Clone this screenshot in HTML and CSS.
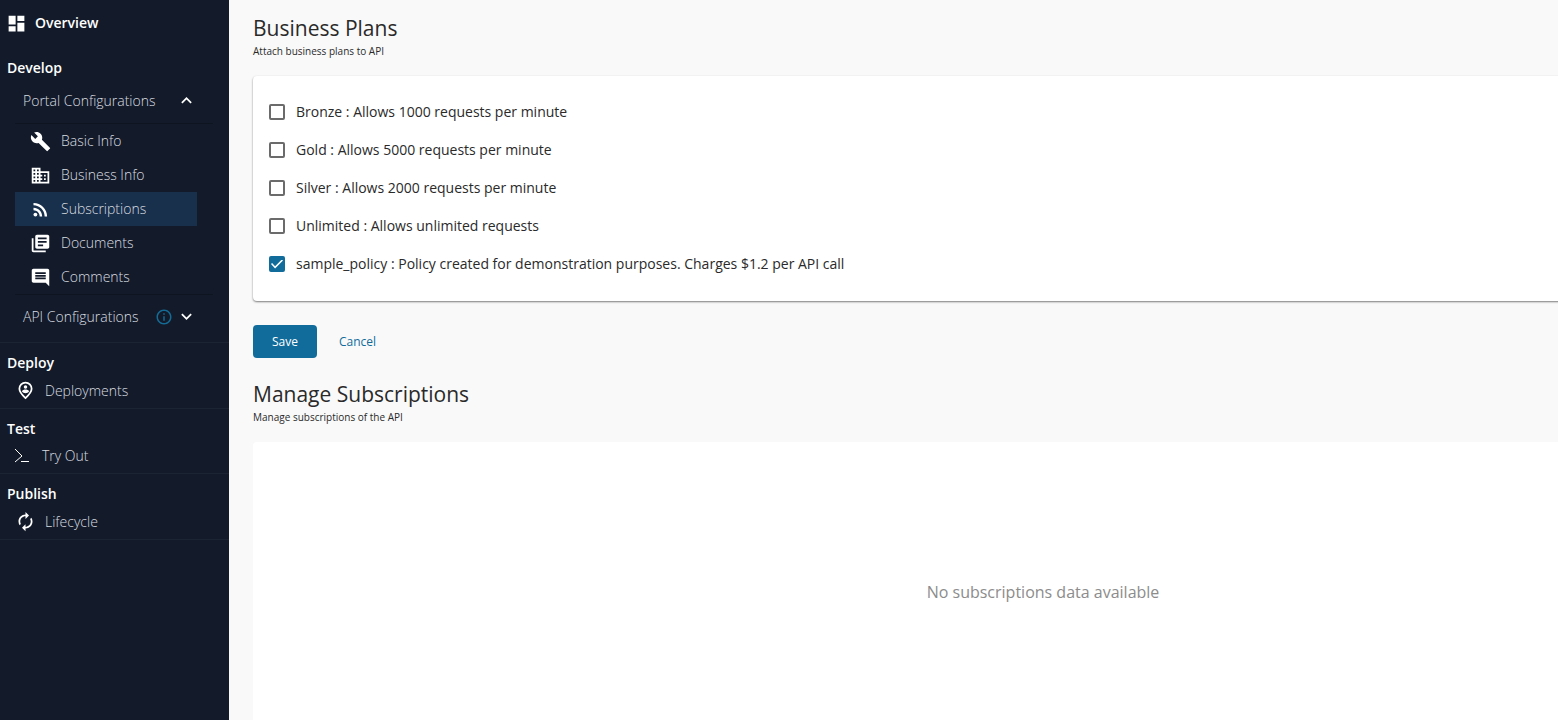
FILE: index.html
```html
<!DOCTYPE html>
<html lang="en">
<head>
<meta charset="utf-8">
<title>Business Plans</title>
<link rel="stylesheet" href="styles.css">
</head>
<body>
<div class="app">
  <nav class="sidebar">
    <a class="overview" href="#">
      <svg class="icon" viewBox="0 0 24 24"><path d="M3 13h8V3H3v10zm0 8h8v-6H3v6zm10 0h8V11h-8v10zm0-18v6h8V3h-8z"/></svg>
      <span>Overview</span>
    </a>
    <section class="group develop">
      <h2 class="group-title">Develop</h2>
      <button class="toggle" type="button"><span>Portal Configurations</span>
        <svg class="chevron" viewBox="0 0 24 24"><path d="M12 8l-6 6 1.410 1.410L12 10.830l4.590 4.580L18 14z"/></svg>
      </button>
      <ul class="subnav">
        <li><a class="item" href="#"><svg class="icon" viewBox="0 0 24 24"><path d="M22.700 19l-9.100-9.100c.9-2.300.4-5-1.500-6.900-2-2-5-2.400-7.400-1.300L9 6 6 9 1.600 4.700C.4 7.100.9 10.100 2.900 12.100c1.900 1.900 4.600 2.400 6.900 1.500l9.100 9.100c.4.4 1 .4 1.400 0l2.300-2.300c.5-.4.5-1.100.1-1.400z"/></svg><span>Basic Info</span></a></li>
        <li><a class="item" href="#"><svg class="icon" viewBox="0 0 24 24"><path d="M12 7V3H2v18h20V7H12zM6 19H4v-2h2v2zm0-4H4v-2h2v2zm0-4H4V9h2v2zm0-4H4V5h2v2zm4 12H8v-2h2v2zm0-4H8v-2h2v2zm0-4H8V9h2v2zm0-4H8V5h2v2zm10 12h-8v-2h2v-2h-2v-2h2v-2h-2V9h8v10zm-2-8h-2v2h2v-2zm0 4h-2v2h2v-2z"/></svg><span>Business Info</span></a></li>
        <li><a class="item selected" href="#" aria-current="page"><svg class="icon" viewBox="0 0 24 24"><circle cx="6.180" cy="17.820" r="2.180"/><path d="M4 4.440v2.830c7.030 0 12.730 5.700 12.730 12.730h2.830c0-8.590-6.970-15.560-15.560-15.560zm0 5.660v2.830c3.900 0 7.070 3.170 7.070 7.070h2.830c0-5.470-4.430-9.900-9.900-9.900z"/></svg><span>Subscriptions</span></a></li>
        <li><a class="item" href="#"><svg class="icon" viewBox="0 0 24 24"><path d="M4 6H2v14c0 1.100.9 2 2 2h14v-2H4V6zm16-4H8c-1.100 0-2 .9-2 2v12c0 1.100.9 2 2 2h12c1.100 0 2-.9 2-2V4c0-1.100-.9-2-2-2zm-1 9H9V9h10v2zm-4 4H9v-2h6v2zm4-8H9V5h10v2z"/></svg><span>Documents</span></a></li>
        <li><a class="item" href="#"><svg class="icon" viewBox="0 0 24 24"><path d="M21.990 4c0-1.100-.89-2-1.990-2H4c-1.100 0-2 .9-2 2v12c0 1.100.9 2 2 2h14l4 4-.01-18zM18 14H6v-2h12v2zm0-3H6V9h12v2zm0-3H6V6h12v2z"/></svg><span>Comments</span></a></li>
      </ul>
      <button class="toggle api" type="button"><span>API Configurations</span>
        <svg class="info" viewBox="0 0 24 24"><path d="M11 17h2v-6h-2v6zm1-15C6.480 2 2 6.480 2 12s4.480 10 10 10 10-4.480 10-10S17.520 2 12 2zm0 18c-4.410 0-8-3.590-8-8s3.590-8 8-8 8 3.590 8 8-3.590 8-8 8zM11 9h2V7h-2v2z"/></svg>
        <svg class="chevron" viewBox="0 0 24 24"><path d="M16.590 8.590L12 13.170 7.410 8.590 6 10l6 6 6-6z"/></svg>
      </button>
    </section>
    <section class="group">
      <h2 class="group-title">Deploy</h2>
      <a class="entry" href="#"><svg class="icon" viewBox="0 0 24 24"><path fill="none" stroke="currentColor" stroke-width="2" d="M12 3c3.900 0 7 3.100 7 7.100 0 3.200-2.300 6.300-7 10.600-4.700-4.300-7-7.400-7-10.600C5 6.100 8.100 3 12 3z"/><circle cx="12" cy="8" r="2"/><path d="M8 13c0-1.500 2.700-2.200 4-2.200s4 .7 4 2.200c-.9 1.200-2.300 2-4 2s-3.100-.8-4-2z"/></svg><span>Deployments</span></a>
    </section>
    <section class="group">
      <h2 class="group-title">Test</h2>
      <a class="entry tryout" href="#"><svg class="terminal" viewBox="0 0 16 16"><path d="M1 1l7 7-7 6M7 13.500h8"/></svg><span>Try Out</span></a>
    </section>
    <section class="group">
      <h2 class="group-title">Publish</h2>
      <a class="entry" href="#"><svg class="icon" viewBox="0 0 24 24"><path d="M12 6v3l4-4-4-4v3c-4.420 0-8 3.580-8 8 0 1.570.46 3.030 1.240 4.260L6.700 14.800c-.45-.83-.7-1.790-.7-2.800 0-3.310 2.690-6 6-6zm6.760 1.740L17.300 9.200c.44.84.7 1.790.7 2.800 0 3.310-2.690 6-6 6v-3l-4 4 4 4v-3c4.420 0 8-3.580 8-8 0-1.570-.46-3.030-1.240-4.260z"/></svg><span>Lifecycle</span></a>
    </section>
  </nav>
  <main class="content">
    <header class="page-head">
      <h1 class="title">Business Plans</h1>
      <p class="subtitle">Attach business plans to API</p>
    </header>
    <form class="plans-form">
      <div class="card plans">
        <label class="plan"><input class="check" type="checkbox"><span>Bronze : Allows 1000 requests per minute</span></label>
        <label class="plan"><input class="check" type="checkbox"><span>Gold : Allows 5000 requests per minute</span></label>
        <label class="plan"><input class="check" type="checkbox"><span>Silver : Allows 2000 requests per minute</span></label>
        <label class="plan"><input class="check" type="checkbox"><span>Unlimited : Allows unlimited requests</span></label>
        <label class="plan"><input class="check" type="checkbox" checked><span>sample_policy : Policy created for demonstration purposes. Charges $1.2 per API call</span></label>
      </div>
      <div class="actions">
        <button class="btn primary" type="button">Save</button>
        <button class="btn text" type="button">Cancel</button>
      </div>
    </form>
    <header class="page-head">
      <h1 class="title">Manage Subscriptions</h1>
      <p class="subtitle">Manage subscriptions of the API</p>
    </header>
    <div class="card empty">
      <p class="empty-text">No subscriptions data available</p>
    </div>
  </main>
</div>
</body>
</html>
```
FILE: styles.css
```css
* { box-sizing: border-box; }

body {
  margin: 0;
  background: #f9f9f9;
  color: #2a2a2a;
  font-family: "Open Sans", "Noto Sans", sans-serif;
  font-size: 14px;
  line-height: 20px;
}

h1, h2, p, ul { margin: 0; padding: 0; }
h1 { font-weight: 400; }
ul { list-style: none; }
a { color: inherit; text-decoration: none; }
button { font: inherit; border: 0; background: none; cursor: pointer; }

.app {
  display: flex;
  height: 100vh;
  overflow: hidden;
}

/* Sidebar */
.sidebar {
  flex: 0 0 229px;
  background: #131b2a;
  color: #d9dce0;
  font-weight: 300;
}

.sidebar svg { fill: currentColor; color: #fff; flex: none; }

.overview {
  display: flex;
  align-items: center;
  gap: 8px;
  height: 46px;
  padding-left: 6px;
  color: #fff;
  font-weight: 600;
}

.icon, .chevron { width: 21px; height: 21px; }

.group {
  padding-top: 8px;
  border-bottom: 1px solid #1b2433;
}

.group-title {
  padding-left: 7px;
  color: #fff;
  font-size: 14px;
  font-weight: 600;
  line-height: 24px;
}

.develop { padding-top: 10px; }

.toggle {
  display: flex;
  align-items: center;
  width: 182px;
  height: 43px;
  margin-left: 15px;
  padding: 0 0 2px 8px;
  color: inherit;
  text-align: left;
}

.toggle span { flex: 1; }
.api { height: 47px; padding-bottom: 4px; }
.sidebar .info { width: 18px; height: 18px; margin-right: 3px; color: #146b96; }

.subnav {
  margin: 0 16px 0 15px;
  border-top: 1px solid #0e1521;
  border-bottom: 1px solid #0e1521;
}

.item {
  display: flex;
  align-items: center;
  gap: 10px;
  width: 182px;
  height: 34px;
  padding-left: 15px;
}

.selected { background: #18304b; }

.entry {
  display: flex;
  align-items: center;
  gap: 9px;
  height: 33px;
  padding: 0 0 2px 15px;
}

.tryout { height: 32px; padding-left: 14px; gap: 12px; }
.sidebar .terminal {
  width: 16px;
  height: 16px;
  fill: none;
  stroke: currentColor;
  stroke-width: 1;
}

/* Content */
.content {
  flex: 1;
  min-width: 0;
  padding: 12px 0 0 24px;
  overflow: hidden;
}

.title { font-size: 21px; line-height: 32px; }
.subtitle { font-size: 10px; line-height: 14px; }
.page-head { padding-bottom: 18px; }

/* Cards run past the right edge of the visible pane */
.card {
  width: calc(100% + 275px);
  background: #fff;
  border-radius: 4px;
}

.plans {
  padding: 17px 16px 18px;
  box-shadow: 0 1px 2px rgba(0, 0, 0, 0.5);
}

.plan {
  display: flex;
  align-items: center;
  gap: 11px;
  width: fit-content;
  height: 38px;
}

.check {
  appearance: none;
  display: grid;
  place-content: center;
  width: 16px;
  height: 16px;
  margin: 0;
  border: 2px solid #6b6b6b;
  border-radius: 2px;
}

.check:checked { background: #116c9b; border-color: #116c9b; }

.check:checked::before {
  content: "";
  width: 12px;
  height: 9px;
  background: #fff;
  clip-path: polygon(0 50%, 9% 40%, 34% 75%, 90% 0, 100% 12%, 34% 100%);
}

.actions {
  display: flex;
  gap: 8px;
  padding: 24px 0 20px;
}

.btn {
  height: 33px;
  padding: 0 14px;
  border-radius: 4px;
  font-size: 12px;
}

.primary { min-width: 64px; background: #116c9b; color: #fff; }
.text { color: #116c9b; }

.empty {
  display: grid;
  place-items: center;
  height: 300px;
}

.empty-text { color: #8c8c8c; font-size: 16px; line-height: 24px; }
```
